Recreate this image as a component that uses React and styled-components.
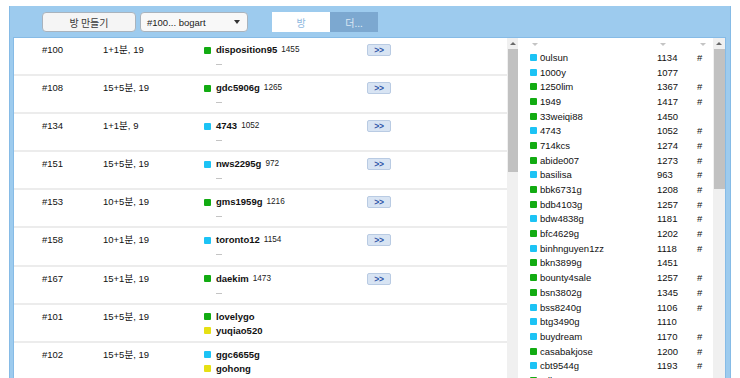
import React from "react";
import styled, { createGlobalStyle } from "styled-components";

const GlobalStyle = createGlobalStyle`
  html, body { margin: 0; padding: 0; background: #ffffff; overflow: hidden; }
  body { font-family: "Liberation Sans", Arial, "Noto Sans CJK KR", sans-serif; }
`;

const COLORS = { g: "#12ab12", c: "#1cc3f5", y: "#e6e014" };

const rooms = [
  { id: "#100", time: "1+1분, 19", players: [{ c: "g", n: "disposition95", r: "1455" }], open: true },
  { id: "#108", time: "15+5분, 19", players: [{ c: "g", n: "gdc5906g", r: "1265" }], open: true },
  { id: "#134", time: "1+1분, 9", players: [{ c: "c", n: "4743", r: "1052" }], open: true },
  { id: "#151", time: "15+5분, 19", players: [{ c: "c", n: "nws2295g", r: "972" }], open: true },
  { id: "#153", time: "10+5분, 19", players: [{ c: "g", n: "gms1959g", r: "1216" }], open: true },
  { id: "#158", time: "10+1분, 19", players: [{ c: "c", n: "toronto12", r: "1154" }], open: true },
  { id: "#167", time: "15+1분, 19", players: [{ c: "g", n: "daekim", r: "1473" }], open: true },
  { id: "#101", time: "15+5분, 19", players: [{ c: "g", n: "lovelygo" }, { c: "y", n: "yuqiao520" }] },
  { id: "#102", time: "15+5분, 19", players: [{ c: "c", n: "ggc6655g" }, { c: "y", n: "gohong" }] },
];

const users = [
  ["c", "0ulsun", "1134", true],
  ["c", "1000y", "1077", false],
  ["g", "1250lim", "1367", true],
  ["g", "1949", "1417", true],
  ["g", "33weiqi88", "1450", false],
  ["c", "4743", "1052", true],
  ["g", "714kcs", "1274", true],
  ["g", "abide007", "1273", true],
  ["c", "basilisa", "963", true],
  ["g", "bbk6731g", "1208", true],
  ["g", "bdb4103g", "1257", true],
  ["c", "bdw4838g", "1181", true],
  ["g", "bfc4629g", "1202", true],
  ["c", "binhnguyen1zz", "1118", true],
  ["g", "bkn3899g", "1451", false],
  ["g", "bounty4sale", "1257", true],
  ["g", "bsn3802g", "1345", true],
  ["c", "bss8240g", "1106", true],
  ["c", "btg3490g", "1110", false],
  ["c", "buydream", "1170", true],
  ["g", "casabakjose", "1200", true],
  ["c", "cbt9544g", "1193", true],
  ["g", "cdh5930g", "1303", true],
];

const Frame = styled.div`
  margin: 6px 0 0 9px;
  width: 722px;
  height: 400px;
  background: #9dcbee;
  border-left: 1px solid #86bbe6;
  border-right: 1px solid #86bbe6;
  display: flex;
  flex-direction: column;
  padding: 0 4px 0 3px;
  box-sizing: border-box;
`;

const Header = styled.div`
  height: 31px;
  display: flex;
  align-items: flex-start;
  padding: 6px 0 0 29px;
  box-sizing: border-box;
`;

const Button = styled.div`
  width: 94px;
  height: 20px;
  box-sizing: border-box;
  border: 1px solid #a9b3bd;
  border-radius: 4px;
  background: #f5f5f5;
  color: #3a3a3a;
  font-size: 10px;
  font-family: "Noto Sans CJK KR", sans-serif;
  display: flex;
  align-items: center;
  justify-content: center;
`;

const Select = styled.div`
  margin-left: 4px;
  width: 108px;
  height: 20px;
  box-sizing: border-box;
  border: 1px solid #a9b3bd;
  border-radius: 4px;
  background: #f8f8f8;
  color: #222;
  font-size: 9.5px;
  display: flex;
  align-items: center;
  justify-content: space-between;
  padding: 0 7px 0 6px;
`;

const Caret = styled.span`
  width: 0;
  height: 0;
  border-left: 3px solid transparent;
  border-right: 3px solid transparent;
  border-top: 4px solid #333;
`;

const Tabs = styled.div`
  margin-left: 24px;
  display: flex;
  height: 20px;
`;

const Tab = styled.div`
  width: ${(p) => (p.$active ? 58 : 48)}px;
  height: 20px;
  background: ${(p) => (p.$active ? "#ffffff" : "#7ca8d0")};
  color: ${(p) => (p.$active ? "#8fb9e0" : "#dce8f4")};
  font-size: 10px;
  font-family: "Noto Sans CJK KR", sans-serif;
  display: flex;
  align-items: center;
  justify-content: center;
`;

const Content = styled.div`
  flex: 1;
  display: flex;
  background: #ffffff;
  border: 1px solid #86bbe6;
  border-bottom: none;
  min-height: 0;
  overflow: hidden;
`;

const RoomPanel = styled.div`
  width: 493px;
  display: flex;
  flex-direction: column;
`;

const RoomRow = styled.div`
  height: 38.1px;
  flex: none;
  box-sizing: border-box;
  border-bottom: 2px solid #ececec;
  display: grid;
  grid-template-columns: 61px 101px 163px auto;
  align-items: start;
  padding: 5px 0 0 28px;
  font-size: 9.5px;
  color: #111;
  line-height: 14px;
`;

const Cell = styled.div`
  white-space: nowrap;
  font-family: "Liberation Sans", "Noto Sans CJK KR", sans-serif;
`;

const PlayerList = styled.div`
  display: flex;
  flex-direction: column;
`;

const PlayerLine = styled.div`
  display: flex;
  align-items: center;
  height: 14px;
  white-space: nowrap;
`;

const Square = styled.span`
  width: 7px;
  height: 7px;
  border-radius: 1px;
  background: ${(p) => p.$color};
  flex: none;
  margin-right: ${(p) => p.$gap}px;
`;

const Name = styled.span`
  font-weight: bold;
  color: #111;
`;

const Rating = styled.span`
  font-size: 8.2px;
  margin-left: 4px;
  color: #222;
`;

const Dash = styled.div`
  margin-left: 12px;
  margin-top: 7px;
  width: 6px;
  height: 1px;
  background: #c4c4c4;
`;

const JoinButton = styled.div`
  margin-top: 1px;
  width: 24px;
  height: 12px;
  box-sizing: border-box;
  border: 1px solid #b9cbe3;
  border-radius: 2px;
  background: #d8e4f3;
  color: #2f55a8;
  font-size: 8.5px;
  font-weight: bold;
  line-height: 10px;
  letter-spacing: -0.3px;
  text-align: center;
`;

const ScrollTrack = styled.div`
  width: ${(p) => p.$w}px;
  flex: none;
  background: #f0f0f0;
  display: flex;
  flex-direction: column;
  align-items: center;
`;

const ScrollArrow = styled.div`
  height: 11px;
  width: 100%;
  display: flex;
  align-items: center;
  justify-content: center;
  &::before {
    content: "";
    width: 0;
    height: 0;
    border-left: 3px solid transparent;
    border-right: 3px solid transparent;
    border-bottom: 3px solid #6a6a6a;
  }
`;

const ScrollThumb = styled.div`
  width: calc(100% - 1px);
  height: ${(p) => p.$h}px;
  background: #c1c1c1;
`;

const UserPanel = styled.div`
  width: 195px;
  display: flex;
  flex-direction: column;
  font-size: 9.5px;
  color: #111;
`;

const UserGrid = styled.div`
  display: grid;
  grid-template-columns: 127px 40px auto;
  padding-left: 12px;
  align-items: center;
  height: ${(p) => p.$h}px;
  flex: none;
  white-space: nowrap;
`;

const SortMark = styled.span`
  display: block;
  margin-left: ${(p) => p.$ml}px;
  width: 0;
  height: 0;
  border-left: 3px solid transparent;
  border-right: 3px solid transparent;
  border-top: 3px solid #c4c4c4;
`;

const UserName = styled.div`
  display: flex;
  align-items: center;
`;

export default function App() {
  return (
    <>
      <GlobalStyle />
      <Frame>
        <Header>
          <Button>방 만들기</Button>
          <Select>
            <span>#100... bogart</span>
            <Caret />
          </Select>
          <Tabs>
            <Tab $active>방</Tab>
            <Tab>더...</Tab>
          </Tabs>
        </Header>
        <Content>
          <RoomPanel>
            {rooms.map((room) => (
              <RoomRow key={room.id}>
                <Cell>{room.id}</Cell>
                <Cell>{room.time}</Cell>
                <PlayerList>
                  {room.players.map((p) => (
                    <PlayerLine key={p.n}>
                      <Square $color={COLORS[p.c]} $gap={5} />
                      <Name>{p.n}</Name>
                      {p.r && <Rating>{p.r}</Rating>}
                    </PlayerLine>
                  ))}
                  {room.open && <Dash />}
                </PlayerList>
                {room.open ? <JoinButton>&gt;&gt;</JoinButton> : <span />}
              </RoomRow>
            ))}
          </RoomPanel>
          <ScrollTrack $w={11}>
            <ScrollArrow />
            <ScrollThumb $h={123} />
          </ScrollTrack>
          <UserPanel>
            <UserGrid $h={12}>
              <SortMark $ml={2} />
              <SortMark $ml={3} />
              <SortMark $ml={3} />
            </UserGrid>
            {users.map(([c, n, r, h]) => (
              <UserGrid key={n} $h={14.7}>
                <UserName>
                  <Square $color={COLORS[c]} $gap={3} />
                  {n}
                </UserName>
                <span>{r}</span>
                <span>{h ? "#" : ""}</span>
              </UserGrid>
            ))}
          </UserPanel>
          <ScrollTrack $w={12}>
            <ScrollArrow />
            <ScrollThumb $h={140} />
          </ScrollTrack>
        </Content>
      </Frame>
    </>
  );
}
